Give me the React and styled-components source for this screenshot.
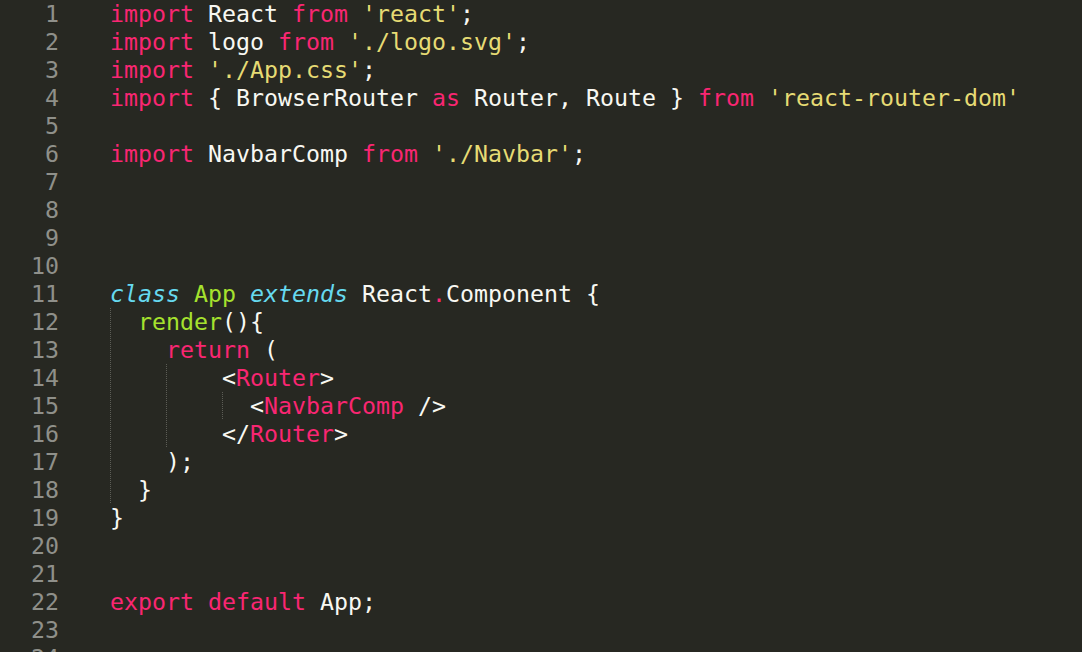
import styled, { createGlobalStyle } from "styled-components";

const GlobalStyle = createGlobalStyle`
    html, body {
        margin: 0;
        padding: 0;
        background: #272822;
    }
`

const Editor = styled.div`
    width: 1082px;
    height: 652px;
    overflow: hidden;
    background: #272822;
    font-family: "DejaVu Sans Mono", "Liberation Mono", monospace;
    font-size: 23.25px;
    line-height: 28px;
`
const Line = styled.div`
    display: flex;
    height: 28px;
`
const LineNo = styled.span`
    width: 59px;
    text-align: right;
    color: #8f908a;
    flex-shrink: 0;
`
const Code = styled.span`
    padding-left: 51px;
    white-space: pre;
    color: #f8f8f2;
`
const Indent = styled.span`
    display: inline-block;
    vertical-align: top;
    height: 28px;
    width: ${({cols}) => cols}ch;
    background-image: ${({guide}) => guide
        ? 'repeating-linear-gradient(to bottom, #5c5d56 0 1px, transparent 1px 2px)'
        : 'none'};
    background-size: 1px 100%;
    background-repeat: no-repeat;
    background-position: 0 0;
`
const Token = styled.span`
    color: ${({couleur}) => couleur};
    font-style: ${({italic}) => italic ? 'italic' : 'normal'};
`

const PINK = '#f92672';
const WHITE = '#f8f8f2';
const YELLOW = '#e6db74';
const GREEN = '#a6e22e';
const BLUE = '#66d9ef';

// each line: indent width, guide columns, tokens [text, colour, italic]
const lines = [
    { tokens: [['import', PINK], [' React '], ['from', PINK], [' '], ["'react'", YELLOW], [';']] },
    { tokens: [['import', PINK], [' logo '], ['from', PINK], [' '], ["'./logo.svg'", YELLOW], [';']] },
    { tokens: [['import', PINK], [' '], ["'./App.css'", YELLOW], [';']] },
    { tokens: [['import', PINK], [' { BrowserRouter '], ['as', PINK], [' Router, Route } '], ['from', PINK], [' '], ["'react-router-dom'", YELLOW]] },
    { tokens: [] },
    { tokens: [['import', PINK], [' NavbarComp '], ['from', PINK], [' '], ["'./Navbar'", YELLOW], [';']] },
    { tokens: [] },
    { tokens: [] },
    { tokens: [] },
    { tokens: [] },
    { tokens: [['class', BLUE, true], [' '], ['App', GREEN], [' '], ['extends', BLUE, true], [' React'], ['.', PINK], ['Component {']] },
    { indent: 2, guides: [0], tokens: [['render', GREEN], ['(){']] },
    { indent: 4, guides: [0], tokens: [['return', PINK], [' (']] },
    { indent: 8, guides: [0, 4], tokens: [['<'], ['Router', PINK], ['>']] },
    { indent: 10, guides: [0, 4, 8], tokens: [['<'], ['NavbarComp', PINK], [' />']] },
    { indent: 8, guides: [0, 4], tokens: [['</'], ['Router', PINK], ['>']] },
    { indent: 4, guides: [0], tokens: [[');']] },
    { indent: 2, guides: [0], tokens: [['}']] },
    { tokens: [['}']] },
    { tokens: [] },
    { tokens: [] },
    { tokens: [['export', PINK], [' '], ['default', PINK], [' App;']] },
    { tokens: [] },
    { tokens: [] },
];

function indentSegments(indent = 0, guides = []) {
    const stops = [...guides, indent];
    const segments = [];
    for (let i = 0; i < stops.length - 1; i++) {
        segments.push(stops[i + 1] - stops[i]);
    }
    return segments;
}

function App() {
    return (
        <Editor>
            <GlobalStyle />
            {lines.map((line, i) => (
                <Line key={i}>
                    <LineNo>{i + 1}</LineNo>
                    <Code>
                        {indentSegments(line.indent, line.guides).map((cols, j) => (
                            <Indent key={j} cols={cols} guide />
                        ))}
                        {line.tokens.map(([text, couleur = WHITE, italic], j) => (
                            <Token key={j} couleur={couleur} italic={italic}>{text}</Token>
                        ))}
                    </Code>
                </Line>
            ))}
        </Editor>
    )
}
export default App;
